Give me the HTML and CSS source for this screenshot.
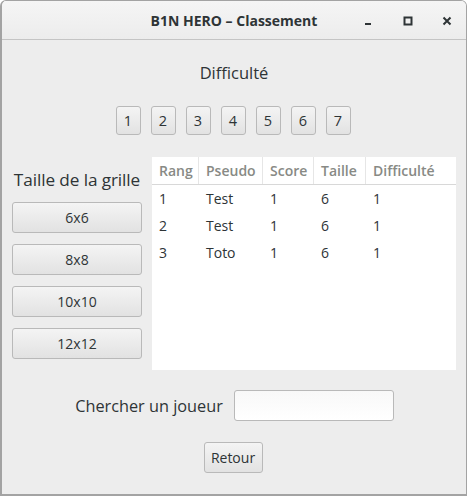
FILE: index.html
```html
<!DOCTYPE html>
<html>
<head>
<meta charset="utf-8">
<link rel="stylesheet" href="styles.css">
</head>
<body>
<div class="window">
  <div class="titlebar">
    <div class="title">B1N HERO – Classement</div>
    <div class="controls">
      <svg width="10" height="10" viewBox="0 0 10 10"><rect x="1" y="7" width="6" height="2" fill="#2e3436"/></svg>
      <svg width="10" height="10" viewBox="0 0 10 10"><rect x="1.5" y="1.5" width="7" height="7" fill="none" stroke="#2e3436" stroke-width="2"/></svg>
      <svg width="10" height="10" viewBox="0 0 10 10"><path d="M1.5 1.5 L8.5 8.5 M8.5 1.5 L1.5 8.5" stroke="#2e3436" stroke-width="2"/></svg>
    </div>
  </div>
  <div class="content">
    <div class="heading">Difficulté</div>
    <div class="levels">
      <button class="btn lvl">1</button>
      <button class="btn lvl">2</button>
      <button class="btn lvl">3</button>
      <button class="btn lvl">4</button>
      <button class="btn lvl">5</button>
      <button class="btn lvl">6</button>
      <button class="btn lvl">7</button>
    </div>
    <div class="middle">
      <div class="sizes">
        <div class="sizes-label">Taille de la grille</div>
        <button class="btn size">6x6</button>
        <button class="btn size">8x8</button>
        <button class="btn size">10x10</button>
        <button class="btn size">12x12</button>
      </div>
      <div class="table">
        <div class="row head">
          <div class="c c1">Rang</div><div class="c c2">Pseudo</div><div class="c c3">Score</div><div class="c c4">Taille</div><div class="c c5">Difficulté</div>
        </div>
        <div class="row">
          <div class="c c1">1</div><div class="c c2">Test</div><div class="c c3">1</div><div class="c c4">6</div><div class="c c5">1</div>
        </div>
        <div class="row">
          <div class="c c1">2</div><div class="c c2">Test</div><div class="c c3">1</div><div class="c c4">6</div><div class="c c5">1</div>
        </div>
        <div class="row">
          <div class="c c1">3</div><div class="c c2">Toto</div><div class="c c3">1</div><div class="c c4">6</div><div class="c c5">1</div>
        </div>
      </div>
    </div>
    <div class="search">
      <span class="search-label">Chercher un joueur</span>
      <input class="search-input" type="text">
    </div>
    <div class="back">
      <button class="btn retour">Retour</button>
    </div>
  </div>
</div>
</body>
</html>
```
FILE: styles.css
```css
html, body {
  margin: 0;
  padding: 0;
  background: #ffffff;
}
body {
  font-family: "Open Sans", "DejaVu Sans", sans-serif;
  color: #2e3436;
}
.window {
  width: 467px;
  height: 496px;
  box-sizing: border-box;
  border: 1px solid #a3a3a3;
  border-left-width: 2px;
  border-bottom-width: 2px;
  border-radius: 6px 6px 0 0;
  background: #ededed;
  display: flex;
  flex-direction: column;
  overflow: hidden;
}
.titlebar {
  height: 38px;
  flex: none;
  background: linear-gradient(#f5f5f5, #ececec);
  border-bottom: 1px solid #c4c4c4;
  position: relative;
  display: flex;
  align-items: center;
  justify-content: center;
}
.title {
  font-weight: bold;
  font-size: 14px;
  color: #2e3436;
  margin-top: 1px;
}
.controls {
  position: absolute;
  right: 14px;
  top: 15px;
  display: flex;
  gap: 29px;
}
.controls svg { display: block; }
.content {
  flex: 1;
  display: flex;
  flex-direction: column;
}
.heading {
  text-align: center;
  font-size: 16.5px;
  margin-top: 21px;
  height: 24px;
  line-height: 24px;
}
.levels {
  display: flex;
  justify-content: center;
  gap: 10px;
  margin-top: 21px;
  padding-right: 2px;
}
.btn {
  font-family: inherit;
  color: #2e3436;
  background: linear-gradient(#f4f4f4, #e2e2e2);
  border: 1px solid #b9b9b9;
  border-radius: 3px;
  padding: 0;
  margin: 0;
}
.lvl {
  width: 25px;
  height: 29px;
  font-size: 14.5px;
}
.middle {
  display: flex;
  margin-top: 22px;
  padding-left: 10px;
  gap: 10px;
}
.sizes {
  width: 130px;
  display: flex;
  flex-direction: column;
  gap: 11px;
}
.sizes-label {
  font-size: 17.2px;
  text-align: center;
  margin-top: 12px;
  margin-bottom: 0;
  line-height: 22px;
  white-space: nowrap;
  letter-spacing: -0.1px;
}
.size {
  height: 31px;
  font-size: 14px;
}
.table {
  width: 304px;
  height: 213px;
  background: #ffffff;
  font-size: 14px;
}
.row {
  display: flex;
  height: 27px;
  line-height: 27px;
}
.row.head {
  height: 27px;
  border-bottom: 1px solid #d8d8d8;
  color: #888a85;
  font-weight: 600;
}
.row.head .c { border-right: 1px solid #e6e6e6; }
.row.head .c5 { border-right: none; }
.c {
  padding-left: 7px;
  box-sizing: border-box;
}
.c1 { width: 47px; }
.c2 { width: 64px; }
.c3 { width: 51px; }
.c4 { width: 52px; }
.c5 { width: 90px; }
.search {
  display: flex;
  align-items: center;
  justify-content: center;
  gap: 11px;
  margin-top: 20px;
  padding-left: 1px;
}
.search-label {
  font-size: 16.3px;
}
.search-input {
  width: 160px;
  height: 31px;
  box-sizing: border-box;
  border: 1px solid #b9b9b9;
  border-radius: 3px;
  background: linear-gradient(#f8f8f8, #ffffff);
  margin: 0;
}
.back {
  display: flex;
  justify-content: center;
  margin-top: 21px;
  padding-right: 2px;
}
.retour {
  width: 59px;
  height: 31px;
  font-size: 14px;
}
```
